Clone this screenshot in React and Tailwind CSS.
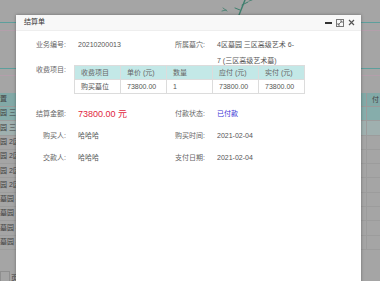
import React from "react";

const bgRows = [
  { text: "园 三区", bg: "bg-[#86adab]" },
  { text: "园 三区", bg: "bg-[#9fb0af]" },
  { text: "园 2区", bg: "bg-[#a5a5a5]" },
  { text: "园 2区", bg: "bg-[#a5a5a5]" },
  { text: "园 2区", bg: "bg-[#a5a5a5]" },
  { text: "园 2区", bg: "bg-[#a5a5a5]" },
  { text: "墓园 —", bg: "bg-[#a5a5a5]" },
  { text: "墓园 —", bg: "bg-[#a5a5a5]" },
  { text: "墓园 —", bg: "bg-[#a5a5a5]" },
  { text: "墓园 —", bg: "bg-[#a5a5a5]" },
];

const feeCols = ["收费项目", "单价 (元)", "数量", "应付 (元)", "实付 (元)"];
const feeRow = ["购买墓位", "73800.00", "1", "73800.00", "73800.00"];

function Bamboo() {
  return (
    <svg width="50" height="16" viewBox="0 0 50 16" fill="none" stroke="#3f7f6e" strokeLinecap="round">
      <path d="M40 0 L34 15" strokeWidth="1.4" />
      <path d="M37 5 L43 2" strokeWidth="1" />
      <path d="M35 10 L30 8" strokeWidth="1" />
      <path d="M18 8 L22 11" strokeWidth="0.8" />
      <path d="M17 11 L21 10" strokeWidth="0.8" />
      <path d="M44 1 L47 0" strokeWidth="0.8" />
    </svg>
  );
}

function InfoRow({ label, value, label2, value2, className }) {
  return (
    <div className={"flex " + className}>
      <div className="flex w-[139px] shrink-0">
        <div className="w-[50px] text-right text-[#666]">{label}</div>
        <div className="ml-[12px]">{value}</div>
      </div>
      <div className="flex">
        <div className="w-[50px] text-right text-[#666]">{label2}</div>
        <div className="ml-[12px]">{value2}</div>
      </div>
    </div>
  );
}

export default function App() {
  return (
    <div className="relative w-[380px] h-[281px] overflow-hidden bg-[#a5a5a5] font-['Liberation_Sans','Noto_Sans_CJK_SC',sans-serif] text-[7px] text-[#444]">
      {/* page behind the dialog */}
      <div className="flex flex-col">
        <div className="h-[15px] pl-[205px]">
          <Bamboo />
        </div>
        <div className="mt-[7px] h-px bg-[#5d9f9c]" />
        <div className="mt-[7px] h-px bg-[#b39fab]" />
        <div className="mt-[37px] h-px bg-[#5d9f9c]" />
        <div className="mt-[6px] h-px bg-[#b39fab]" />
        <div className="mt-[17px] flex h-[14px] items-center bg-[#82a9a7] border-b border-[#9a9a9a]">
          <div className="w-[16px]">置</div>
          <div className="flex-1" />
          <div className="w-[14px] border-l border-[#9a9a9a] pl-[5px] h-full leading-[14px]">付</div>
        </div>
        {bgRows.map((r, i) => (
          <div key={i} className={"flex h-[14.3px] items-center border-b border-[#9c9c9c] " + r.bg}>
            <div className="w-[30px] whitespace-nowrap">{r.text}</div>
            <div className="flex-1" />
            <div className="w-[14px] border-l border-[#9c9c9c] h-full" />
          </div>
        ))}
        <div className="mt-[21px] flex h-[14px] items-center">
          <div className="w-[10px] h-full border border-[#8f8f8f]" />
          <span className="ml-[1px]">页</span>
        </div>
      </div>

      {/* dialog */}
      <div className="absolute left-[16px] top-[15px] w-[345px] h-[270px] bg-white shadow-[0_0_3px_rgba(0,0,0,0.35)] text-[#555]">
        <div className="flex h-[16px] items-center justify-between border-b border-[#eee] bg-[#f8f8f8] pl-[8px] pr-[6px]">
          <span className="text-[#333]">结算单</span>
          <div className="flex items-center gap-[4px]">
            <div className="w-[7px] h-[2px] bg-[#333]" />
            <svg width="8" height="8" viewBox="0 0 8 8" fill="none" stroke="#777" strokeWidth="1">
              <rect x="0.5" y="0.5" width="7" height="7" />
              <path d="M2 6 L6 2 M4 2 H6 V4 M2 4 V6 H4" />
            </svg>
            <svg width="7" height="7" viewBox="0 0 7 7" stroke="#555" strokeWidth="1.2">
              <path d="M1 1 L6 6 M6 1 L1 6" />
            </svg>
          </div>
        </div>

        <div className="pt-[6px]">
          <InfoRow
            className="h-[28px] leading-[16px]"
            label="业务编号:"
            value="20210200013"
            label2="所属墓穴:"
            value2={
              <>
                4区墓园 三区高级艺术 6-
                <br />7 (三区高级艺术墓)
              </>
            }
          />

          <div className="flex">
            <div className="w-[50px] text-right text-[#666] leading-[9px]">收费项目:</div>
            <table className="ml-[8px] border-collapse text-[#666]">
              <thead>
                <tr className="bg-[#c3e8e7]">
                  {feeCols.map((c) => (
                    <td key={c} className="w-[46px] h-[14px] border border-[#dcdcdc] pl-[6px] leading-[12px]">
                      {c}
                    </td>
                  ))}
                </tr>
              </thead>
              <tbody>
                <tr>
                  {feeRow.map((c, i) => (
                    <td key={i} className="w-[46px] h-[14px] border border-[#dcdcdc] pl-[6px] leading-[12px] text-[#555]">
                      {c}
                    </td>
                  ))}
                </tr>
              </tbody>
            </table>
          </div>

          <div className="mt-[9px]">
            <InfoRow
              className="h-[22px] leading-[22px]"
              label="结算金额:"
              value={<span className="text-[9px] text-[#e1253d]">73800.00 元</span>}
              label2="付款状态:"
              value2={<span className="text-[#3b35d6]">已付款</span>}
            />
            <InfoRow
              className="h-[22px] leading-[22px]"
              label="购买人:"
              value="哈哈哈"
              label2="购买时间:"
              value2="2021-02-04"
            />
            <InfoRow
              className="h-[22px] leading-[22px]"
              label="交款人:"
              value="哈哈哈"
              label2="支付日期:"
              value2="2021-02-04"
            />
          </div>
        </div>
      </div>
    </div>
  );
}
